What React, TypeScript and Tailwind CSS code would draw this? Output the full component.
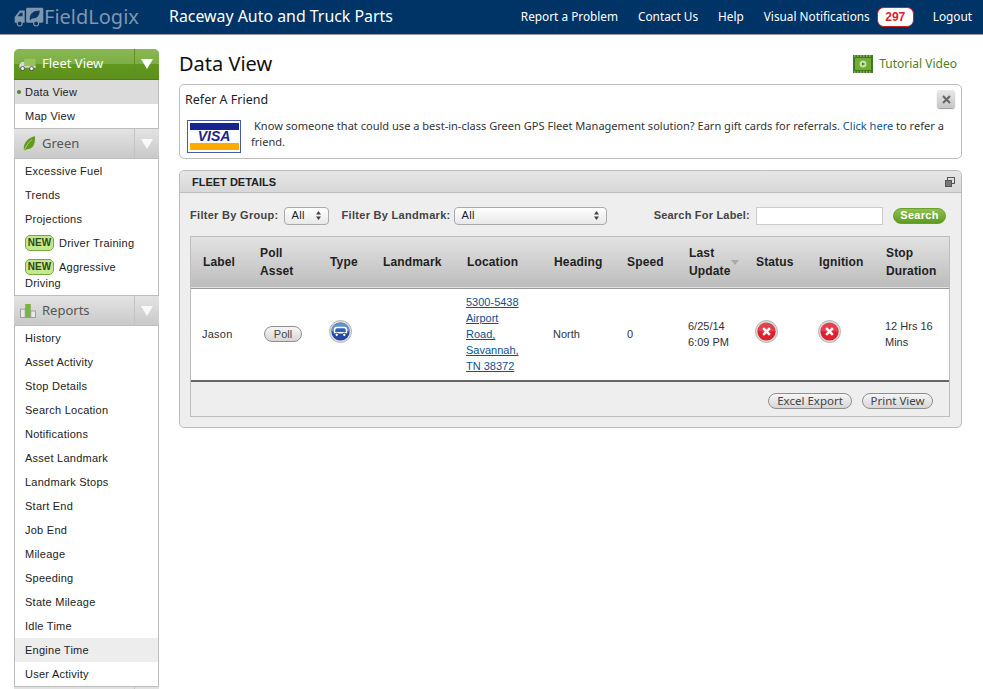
import React from 'react';

const lucida = 'font-["Noto_Sans","DejaVu_Sans",sans-serif]';

const fleetItems = ['Data View', 'Map View'];
const greenItems = ['Excessive Fuel', 'Trends', 'Projections'];
const reportItems = ['History', 'Asset Activity', 'Stop Details', 'Search Location', 'Notifications', 'Asset Landmark', 'Landmark Stops', 'Start End', 'Job End', 'Mileage', 'Speeding', 'State Mileage', 'Idle Time', 'Engine Time', 'User Activity'];

const Caret = ({ dim }: { dim?: boolean }) => (
  <svg width="12" height="10" viewBox="0 0 12 10"><path d="M0 0h12L6 10z" fill="#fff" opacity={dim ? 0.85 : 1} /></svg>
);

const Logo = () => (
  <svg width="30" height="20" viewBox="0 0 42 28" className="shrink-0">
    <path d="M1 22v-8l7-9h7v17z" fill="#7f97ae" />
    <path d="M5 13l4-5h3v5z" fill="#0a3566" />
    <rect x="17" y="1" width="24" height="21" rx="2" fill="#7f97ae" />
    <path d="M22 17c0-8 5-12 14-12 0 8-5 12-11 11l-2 3z" fill="#0a3566" />
    <circle cx="8" cy="23" r="3.500" fill="#0a3566" stroke="#7f97ae" strokeWidth="1.500" />
    <circle cx="31" cy="23" r="3.500" fill="#0a3566" stroke="#7f97ae" strokeWidth="1.500" />
  </svg>
);

const Truck = () => (
  <svg width="17" height="13" viewBox="0 0 20 16">
    <rect x="6" y="1" width="14" height="10" fill="#94c45a" />
    <path d="M0 11V8l3-3h3v6z" fill="#d8d8d8" />
    <rect x="0" y="10" width="20" height="2" fill="#d8d8d8" />
    <circle cx="4" cy="13" r="2.500" fill="#eee" stroke="#444" />
    <circle cx="15" cy="13" r="2.500" fill="#eee" stroke="#444" />
  </svg>
);

const Leaf = () => (
  <svg width="13" height="16" viewBox="0 0 14 18">
    <path d="M1 17C-1 9 4 3 13 0c1 9-2 15-9 15z" fill="#5f9a1f" />
    <path d="M1 17C3 11 6 7 10 4" stroke="#cfe3a6" strokeWidth="0.800" fill="none" />
  </svg>
);

const Bars = () => (
  <svg width="16" height="14" viewBox="0 0 17 15">
    <rect x="0.500" y="5.500" width="5" height="9" fill="#e8e8e8" stroke="#999" />
    <rect x="5.500" y="0" width="6" height="15" fill="#7db343" />
    <rect x="11.500" y="7.500" width="5" height="7" fill="#e8e8e8" stroke="#999" />
  </svg>
);

const XIcon = () => (
  <svg width="23" height="23" viewBox="0 0 24 24">
    <circle cx="12" cy="12" r="11.500" fill="#d9d9d9" stroke="#b5b5b5" />
    <circle cx="12" cy="12" r="9.500" fill="#e0202f" />
    <path d="M3 11a9 9 0 0 1 18 0c-5 2-13 2-18 0z" fill="#fff" opacity="0.15" />
    <path d="M8.500 8.500l7 7M15.500 8.500l-7 7" stroke="#fff" strokeWidth="2.600" />
  </svg>
);

const BusIcon = () => (
  <svg width="23" height="23" viewBox="0 0 24 24">
    <circle cx="12" cy="12" r="11.500" fill="#dcdcdc" stroke="#b5b5b5" />
    <circle cx="12" cy="12" r="9.500" fill="#2347a8" />
    <path d="M2.500 12a9.500 9.500 0 0 1 19 0z" fill="#5f93cc" />
    <path d="M5 14v-4q0-3 3-3h8q3 0 3 3v4z" fill="#fff" />
    <path d="M6.500 12.500v-2q0-2 2-2h7q2 0 2 2v2z" fill="#2f62b5" />
    <circle cx="8" cy="15.500" r="1.800" fill="#fff" stroke="#1c3a8c" />
    <circle cx="16" cy="15.500" r="1.800" fill="#fff" stroke="#1c3a8c" />
  </svg>
);

const Visa = () => (
  <svg width="54" height="33" viewBox="0 0 54 33" className="shrink-0">
    <rect x="0.500" y="0.500" width="53" height="32" fill="#fff" stroke="#4a5aa8" />
    <rect x="3" y="3" width="49" height="7" fill="#16258f" />
    <rect x="3" y="23" width="49" height="7" fill="#fdab00" />
    <text x="27" y="21" textAnchor="middle" fontFamily="Liberation Sans" fontSize="14" fontWeight="700" fontStyle="italic" fill="#16258f">VISA</text>
  </svg>
);

const Filmstrip = () => (
  <svg width="20" height="18" viewBox="0 0 20 18">
    <rect width="20" height="18" fill="#3f7a1c" />
    <rect x="2" y="3" width="16" height="12" fill="#70ab35" />
    <path d="M1 1h18M1 17h18" stroke="#c9dcb0" strokeWidth="1" strokeDasharray="1.500 1.500" />
    <circle cx="10" cy="9" r="3.500" fill="#c6dfa5" />
    <path d="M9 7.500L12 9l-3 1.500z" fill="#3f7a1c" />
  </svg>
);

const UpDown = () => (
  <svg width="5" height="9" viewBox="0 0 5 9" className="shrink-0"><path d="M0 3.500L2.500 0 5 3.500zM0 5.500L2.500 9 5 5.500z" fill="#444" /></svg>
);

const SectionHead = ({ icon, label, active }: { icon: React.ReactNode; label: string; active?: boolean }) => (
  <div className={`flex h-[31px] ${active ? 'bg-[linear-gradient(#8ab753_0%,#7dae45_50%,#63981f_50%,#5c9019_100%)] rounded-t-[5px] text-white border-b border-[#4f7f18]' : 'bg-linear-to-b from-[#e3e3e3] to-[#c9c9c9] text-[#555] border-y border-[#bdbdbd]'}`}>
    <div className={`flex flex-1 items-center tracking-normal ${lucida} text-[13px]`}>
      <span className="flex w-[28px] justify-end pr-[6px]">{icon}</span>
      <span>{label}</span>
    </div>
    <div className={`flex w-[25px] items-center justify-center border-l ${active ? 'border-[#5f8f27]' : 'border-[#c2c2c2]'}`}>
      <Caret dim={!active} />
    </div>
  </div>
);

const NavItem = ({ label, bg, dot }: { label: string; bg?: string; dot?: boolean }) => (
  <div className={`relative flex h-6 items-center pl-[10px] ${bg ?? 'bg-white'}`}>
    {dot && <span className="absolute left-[2px] top-[10px] h-[4px] w-[4px] rounded-full bg-[#4f8a1a]" />}
    {label}
  </div>
);

const NewBadge = () => (
  <span className="mr-[5px] inline-block h-4 w-[29px] rounded-[5px] border border-[#76a83c] bg-[#c4e88e] text-center align-top text-[10px] font-bold leading-[14px] tracking-normal text-[#2f4a14]">NEW</span>
);

const Pill = ({ children, className }: { children: React.ReactNode; className: string }) => (
  <span className={`inline-flex h-4 items-center justify-center rounded-full border border-[#8f8f8f] bg-linear-to-b from-[#f6f6f6] to-[#d6d6d6] text-[#444] ${className}`}>{children}</span>
);

const columns: [string, number][] = [['Label', 57], ['Poll Asset', 70], ['Type', 53], ['Landmark', 84], ['Location', 87], ['Heading', 73], ['Speed', 62], ['Last Update', 67], ['Status', 63], ['Ignition', 67], ['Stop Duration', 75]];

export default function App() {
  return (
    <div className="h-screen w-full overflow-hidden bg-white font-['Liberation_Sans',Arial,sans-serif] text-[11px] text-[#222]">
      <header className={`flex h-[35px] items-center justify-between border-b border-[#9a9a9a] bg-[#003366] pr-[11px] text-white ${lucida}`}>
        <div className="flex items-center">
          <div className="ml-[14px] flex w-[155px] items-center text-[#7f97ae]">
            <Logo />
            <span className="text-[20px] leading-none">FieldLogix</span>
          </div>
          <span className="pb-px text-[15.900px]">Raceway Auto and Truck Parts</span>
        </div>
        <nav className="flex items-center text-[11.800px]">
          <span>Report a Problem</span>
          <span className="ml-[20px]">Contact Us</span>
          <span className="ml-[20px]">Help</span>
          <span className="ml-[20px]">Visual Notifications</span>
          <span className="ml-[7px] flex h-[20px] w-[37px] items-center justify-center rounded-[7px] border border-[#c22] bg-white font-['Liberation_Sans',sans-serif] text-[12px] font-bold text-[#e0202f]">297</span>
          <span className="ml-[19px]">Logout</span>
        </nav>
      </header>

      <div className="flex items-start">
        <aside className="ml-[14px] mt-[14px] w-[145px] shrink-0 rounded-t-[5px] border-x border-[#bdbdbd] tracking-[0.25px]">
          <div className="-mx-px"><SectionHead icon={<Truck />} label="Fleet View" active /></div>
          <NavItem label={fleetItems[0]} bg="bg-[#dcdcdc]" dot />
          <NavItem label={fleetItems[1]} />
          <div className="-mx-px"><SectionHead icon={<Leaf />} label="Green" /></div>
          {greenItems.map((l) => <NavItem key={l} label={l} />)}
          <div className="flex h-6 items-center pl-[10px]"><NewBadge />Driver Training</div>
          <div className="px-[10px] py-[4px] leading-4"><NewBadge />Aggressive Driving</div>
          <div className="-mx-px"><SectionHead icon={<Bars />} label="Reports" /></div>
          {reportItems.map((l) => <NavItem key={l} label={l} bg={l === 'Engine Time' ? 'bg-[#ededed]' : undefined} />)}
          <div className="-mx-px"><SectionHead icon={null} label="" /></div>
        </aside>

        <main className="ml-5 w-[783px]">
          <div className={`flex h-[49px] items-center justify-between pt-[8px] ${lucida}`}>
            <h1 className="text-[20px] text-[#111]">Data View</h1>
            <div className="mr-[5px] flex items-center gap-[6px] text-[12px] text-[#4f7f25]"><Filmstrip />Tutorial Video</div>
          </div>

          <section className={`relative h-[75px] rounded-[5px] border border-[#bdbdbd] ${lucida}`}>
            <div className="pl-[5px] pt-[6px] text-[12.500px] text-[#222]">Refer A Friend</div>
            <div className="mr-[14px] mt-[10px] flex pl-[7px]">
              <Visa />
              <p className="-mt-[2px] ml-[10px] indent-[3px] text-[11.050px] leading-4 text-[#333]">
                Know someone that could use a best-in-class Green GPS Fleet Management solution? Earn gift cards for referrals. <span className="text-[#0b5394]">Click here</span> to refer a friend.
              </p>
            </div>
            <div className="absolute right-[6px] top-[5px] flex h-[18px] w-[18px] items-center justify-center rounded-[3px] bg-linear-to-b from-[#e8e8e8] to-[#c6c6c6] shadow-[0_1px_1px_#999]">
              <svg width="9" height="9" viewBox="0 0 9 9"><path d="M1 1l7 7M8 1l-7 7" stroke="#666" strokeWidth="2" /></svg>
            </div>
          </section>

          <section className="mt-[11px] h-[258px] rounded-[5px] border border-[#bdbdbd] bg-[#eeeeee]">
            <div className="flex h-[22px] items-center justify-between rounded-t-[5px] border-b border-[#bdbdbd] bg-linear-to-b from-[#e6e6e6] to-[#d8d8d8] pl-3 pr-[6px] pt-px">
              <span className="text-[11px] font-bold text-[#222]">FLEET DETAILS</span>
              <svg width="10" height="10" viewBox="0 0 10 10"><rect x="2.500" y="0.500" width="7" height="6" fill="#ddd" stroke="#555" /><rect x="0.500" y="3.500" width="6" height="6" fill="#777" stroke="#555" /></svg>
            </div>

            <div className="flex h-[43px] items-center pl-[10px] pr-[15px] pt-[2px] font-bold tracking-[0.3px] text-[#444]">
              <span>Filter By Group:</span>
              <div className="ml-[5px] flex h-[18px] w-[45px] items-center justify-between rounded-[4px] border border-[#aaa] bg-linear-to-b from-white to-[#e8e8e8] pl-[7px] pr-[7px] font-normal text-[#222]">All<UpDown /></div>
              <span className="ml-[13px]">Filter By Landmark:</span>
              <div className="ml-[3px] flex h-[18px] w-[153px] items-center justify-between rounded-[4px] border border-[#aaa] bg-linear-to-b from-white to-[#e8e8e8] pl-[7px] pr-[7px] font-normal text-[#222]">All<UpDown /></div>
              <span className="ml-auto tracking-[0.2px]">Search For Label:</span>
              <input readOnly className="ml-[6px] h-[18px] w-[127px] border border-[#ccc] bg-white" />
              <span className="ml-[10px] flex h-4 w-[53px] items-center justify-center rounded-full border border-[#69a02a] bg-linear-to-b from-[#8fc150] to-[#5f9a1f] font-bold text-white">Search</span>
            </div>

            <div className="mx-[10px] h-[181px] w-[760px] border border-[#bdbdbd]">
              <table className="w-full table-fixed border-collapse">
                <colgroup>{columns.map(([c, w]) => <col key={c} style={{ width: w }} />)}</colgroup>
                <thead>
                  <tr className="h-[51px] border-b border-[#999] bg-linear-to-b from-[#e2e2e2] to-[#bdbdbd] text-[12px] leading-[18px] tracking-[0.15px] text-[#222]">
                    {columns.map(([c]) => (
                      <th key={c} className="relative pl-3 pr-1 text-left font-bold">
                        {c}
                        {c === 'Last Update' && <svg width="8" height="5" viewBox="0 0 8 5" className="absolute right-[5px] top-[23px]"><path d="M0 0h8L4 5z" fill="#aaa" /></svg>}
                      </th>
                    ))}
                  </tr>
                </thead>
                <tbody>
                  <tr className="h-[93px] border-b-2 border-[#666] bg-white leading-4 text-[#333]">
                    <td className="pl-[11px] tracking-[0.25px]">Jason</td>
                    <td className="pl-[16px]"><Pill className="w-[38px] text-[11px]">Poll</Pill></td>
                    <td className="pb-[5px] pl-[11px]"><BusIcon /></td>
                    <td />
                    <td className="pl-[11px] pr-[16px] text-[#0b5394] underline">5300-5438 Airport Road, Savannah, TN 38372</td>
                    <td className="pl-[11px]">North</td>
                    <td className="pl-3">0</td>
                    <td className="pl-[11px] pr-3">6/25/14 6:09 PM</td>
                    <td className="pb-[5px] pl-[11px]"><XIcon /></td>
                    <td className="pb-[5px] pl-[11px]"><XIcon /></td>
                    <td className="pl-[11px]">12 Hrs 16 Mins</td>
                  </tr>
                </tbody>
              </table>
              <div className="flex h-[33px] items-center justify-end gap-[10px] pr-[16px] pt-[4px]">
                <Pill className={`w-[84px] text-[11.500px] ${lucida}`}>Excel Export</Pill>
                <Pill className={`w-[71px] text-[11.500px] ${lucida}`}>Print View</Pill>
              </div>
            </div>
          </section>
        </main>
      </div>
    </div>
  );
}
